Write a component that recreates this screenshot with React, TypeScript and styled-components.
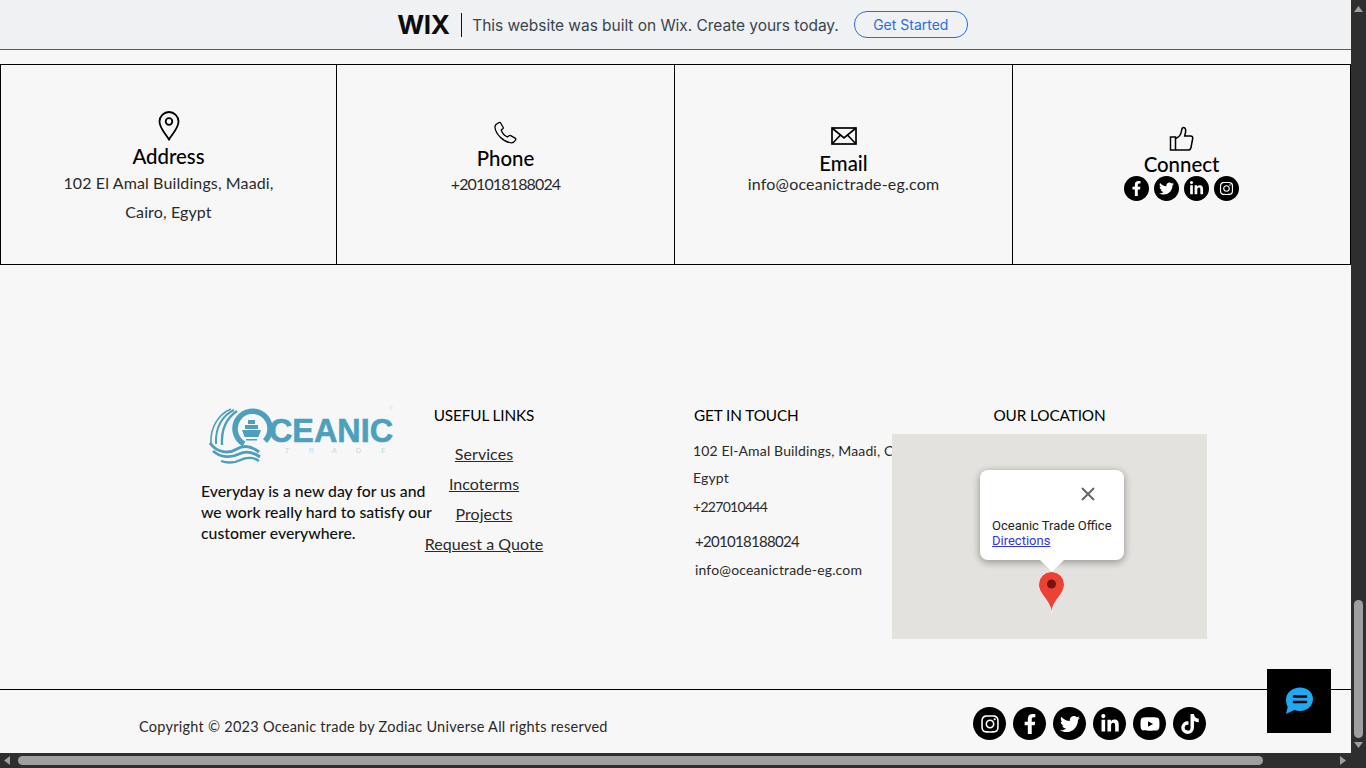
import styled, { createGlobalStyle } from "styled-components";
import { FaFacebookF, FaTwitter, FaLinkedinIn, FaInstagram, FaYoutube, FaTiktok } from "react-icons/fa";

const GlobalStyle = createGlobalStyle`
  html, body {
    margin: 0;
    padding: 0;
    height: 100%;
    overflow: hidden;
    background: #f7f7f7;
    font-family: "Lato", "Liberation Sans", sans-serif;
    color: #000;
  }
`;

const Shell = styled.div`
  width: 1366px;
  height: 768px;
  display: grid;
  grid-template-columns: 1351px 15px;
  grid-template-rows: 753px 15px;
  overflow: hidden;
`;

const Page = styled.div`
  position: relative;
  background: #f7f7f7;
  overflow: hidden;
`;

const Banner = styled.div`
  height: 49px;
  padding-left: 14px;
  background: #eff1f2;
  border-bottom: 1px solid #2f5fb8;
  display: flex;
  align-items: center;
  justify-content: center;
  font-family: "Inter", sans-serif;
`;

const WixMark = styled.span`
  font-family: "Inter", sans-serif;
  font-weight: 700;
  font-size: 26px;
  letter-spacing: -0.4px;
  color: #0c0c0c;
  width: 53px;
`;

const BannerRule = styled.div`
  width: 1px;
  height: 24px;
  background: #111;
  margin: 0 10px 0 11px;
`;

const BannerText = styled.span`
  font-size: 15.5px;
  color: #3a4450;
  letter-spacing: -0.04px;
  margin-top: 1px;
`;

const GetStarted = styled.span`
  margin-left: 15px;
  width: 112px;
  height: 25px;
  border: 1px solid #2a6fdb;
  border-radius: 13px;
  color: #2a6fdb;
  font-size: 14px;
  display: flex;
  align-items: center;
  justify-content: center;
`;

const ContactRow = styled.div`
  margin-top: 14px;
  height: 201px;
  display: grid;
  grid-template-columns: 336px 338px 338px 339px;
  border-top: 1px solid #000;
  border-bottom: 1px solid #000;
  box-sizing: border-box;
`;

const ContactCell = styled.div<{ $top: number; $last?: boolean }>`
  border-left: 1px solid #000;
  ${({ $last }) => $last && "border-right: 1px solid #000;"}
  display: flex;
  flex-direction: column;
  align-items: center;
  padding-top: ${({ $top }) => $top}px;
  box-sizing: border-box;
`;

const ContactIcon = styled.div<{ $gap?: number }>`
  display: flex;
  margin-bottom: ${({ $gap }) => $gap || 0}px;
`;

const ContactTitle = styled.div<{ $gap?: number }>`
  font-size: 20.4px;
  line-height: 24px;
  font-weight: 500;
  color: #000;
  margin-bottom: ${({ $gap }) => $gap || 0}px;
`;

const ContactText = styled.div<{ $spacing?: number }>`
  font-size: 16px;
  line-height: 29px;
  font-weight: 400;
  text-align: center;
  letter-spacing: ${({ $spacing }) => $spacing ?? 0.12}px;
  color: #2a2a2a;
`;

const MiniSocial = styled.div`
  display: flex;
  gap: 5px;
`;

const Disc = styled.span<{ $size: number; $icon: number }>`
  width: ${({ $size }) => $size}px;
  height: ${({ $size }) => $size}px;
  border-radius: 50%;
  background: #000;
  color: #fff;
  display: flex;
  align-items: center;
  justify-content: center;
  font-size: ${({ $icon }) => $icon}px;
`;

const FooterGrid = styled.div`
  height: 424px;
  box-sizing: border-box;
  padding: 140px 0 0 0;
  display: grid;
  grid-template-columns: 201px 222px 122px 148px 199px 315px;
  grid-template-rows: 284px;
`;

const Spacer = styled.div``;

const BrandCol = styled.div`
  display: flex;
  flex-direction: column;
`;

const BrandText = styled.p`
  margin: 15px 0 0;
  width: 240px;
  font-size: 15.8px;
  line-height: 21px;
  font-weight: 500;
  color: #111;
  white-space: nowrap;
`;

const LinksCol = styled.div`
  display: flex;
  flex-direction: column;
  align-items: center;
  white-space: nowrap;
`;

const ColHeading = styled.div`
  font-size: 15.3px;
  line-height: 20px;
  font-weight: 400;
  letter-spacing: -0.1px;
  color: #000;
  white-space: nowrap;
`;

const LinkList = styled.div`
  margin-top: 13.5px;
  display: flex;
  flex-direction: column;
  align-items: center;
`;

const FooterLink = styled.a`
  font-size: 16px;
  line-height: 30.3px;
  font-weight: 400;
  letter-spacing: 0.05px;
  color: #2a2a2a;
  text-decoration: underline;
`;

const TouchCol = styled.div`
  overflow: hidden;
  white-space: nowrap;
`;

const TouchHeading = styled(ColHeading)`
  padding-left: 1px;
`;

const TouchLine = styled.div<{ $size?: number; $indent?: number; $gap?: number; $spacing?: number }>`
  font-size: ${({ $size }) => $size || 14}px;
  line-height: 28px;
  font-weight: 400;
  letter-spacing: ${({ $spacing }) => $spacing ?? 0.15}px;
  color: #2a2a2a;
  padding-left: ${({ $indent }) => $indent || 0}px;
  margin-top: ${({ $gap }) => $gap || 0}px;
`;

const TouchLines = styled.div`
  margin-top: 12px;
`;

const LocationCol = styled.div`
  display: flex;
  flex-direction: column;
`;

const LocationHeading = styled(ColHeading)`
  text-align: center;
  height: 29px;
`;

const MapBox = styled.div`
  position: relative;
  width: 315px;
  height: 205px;
  background: #e3e2de;
`;

const MapPopup = styled.div`
  position: absolute;
  left: 88px;
  top: 36px;
  width: 144px;
  height: 90px;
  box-sizing: border-box;
  padding: 48px 12px 0;
  background: #fff;
  border-radius: 8px;
  box-shadow: 0 2px 7px 1px rgba(0, 0, 0, 0.3);
  font-family: "Roboto", sans-serif;
  font-size: 13px;
  line-height: 15px;
  color: #222;
  white-space: nowrap;

  &::after {
    content: "";
    position: absolute;
    left: 60px;
    top: 90px;
    border-left: 12px solid transparent;
    border-right: 12px solid transparent;
    border-top: 12px solid #fff;
  }
`;

const PopupClose = styled.svg`
  position: absolute;
  left: 100px;
  top: 16px;
`;

const Directions = styled.a`
  display: block;
  color: #3333ee;
  text-decoration: underline;
`;

const MapPin = styled.svg`
  position: absolute;
  left: 145px;
  top: 137px;
`;

const BottomBar = styled.div`
  height: 64px;
  border-top: 1px solid #000;
  display: flex;
  align-items: flex-start;
`;

const Copyright = styled.div`
  margin: 28px 0 0 139px;
  width: 834px;
  font-size: 14.5px;
  line-height: 18px;
  font-weight: 400;
  letter-spacing: 0.26px;
  color: #2a2a2a;
`;

const BigSocial = styled.div`
  margin-top: 17px;
  display: flex;
  gap: 7px;
`;

const ChatButton = styled.div`
  position: absolute;
  left: 1267px;
  top: 669px;
  width: 64px;
  height: 64px;
  background: #000;
  display: flex;
  align-items: center;
  justify-content: center;
`;

const VTrack = styled.div`
  background: #2e2e2e;
  position: relative;
`;

const VThumb = styled.div`
  position: absolute;
  left: 3px;
  right: 3px;
  top: 600px;
  bottom: 15px;
  background: #9f9f9f;
  border-radius: 5px;
`;

const ScrollArrow = styled.svg<{ $left: number; $top: number }>`
  position: absolute;
  left: ${({ $left }) => $left}px;
  top: ${({ $top }) => $top}px;
`;

const HTrack = styled.div`
  background: #2e2e2e;
  position: relative;
`;

const HThumb = styled.div`
  position: absolute;
  left: 18px;
  width: 1245px;
  top: 3px;
  bottom: 3px;
  background: #9f9f9f;
  border-radius: 5px;
`;

const Corner = styled.div`
  background: #2e2e2e;
`;

const Wordmark = styled.text`
  font-family: "Liberation Sans", sans-serif;
  font-weight: 700;
`;

const LogoSmall = styled.text`
  font-family: "Liberation Sans", sans-serif;
  font-weight: 400;
`;

const PinIcon = () => (
  <svg width="24" height="30" viewBox="0 0 24 30" fill="none" stroke="#000" strokeWidth="1.8">
    <path d="M12 28.500C8 22 2.500 17 2.500 10.500a9.500 9.500 0 0 1 19 0C21.500 17 16 22 12 28.500Z" />
    <circle cx="12" cy="10.500" r="3.300" />
  </svg>
);

const PhoneIcon = () => (
  <svg width="26" height="24" viewBox="0 0 26 24" fill="none" stroke="#000" strokeWidth="1.3">
    <path d="M3 3.500 6 1.500c.8-.4 1.400 0 1.800.7l2.300 4c.3.6.2 1.200-.3 1.600L8.200 9c1 3 3.400 5.700 6.200 7l1.600-1.300c.5-.4 1.100-.4 1.700-.1l4.400 2.500c.8.500.9 1.200.5 1.900-1 1.800-2.600 3-4.500 2.800C10 21 2.800 13 2 6.500 1.900 5.300 2.200 4.300 3 3.500Z" />
  </svg>
);

const MailIcon = () => (
  <svg width="26" height="18" viewBox="0 0 26 18" fill="none" stroke="#000" strokeWidth="1.7">
    <rect x="1" y="1" width="24" height="16" />
    <path d="M1 1 13 11 25 1M1 17 9.500 8M25 17 16.500 8" />
  </svg>
);

const ThumbIcon = () => (
  <svg width="26" height="26" viewBox="0 0 26 26" fill="none" stroke="#000" strokeWidth="1.500">
    <rect x="1.500" y="11" width="5" height="13" />
    <path d="M6.500 12.500c3-1 5.500-4 6-7.500.2-1.600.6-3.500 2-3.500 2 0 2.500 2.500 2 5l-.8 3.500h6c1.500 0 2.300 1 2 2.500l-1.700 9c-.3 1.500-1.200 2.500-2.800 2.500H6.500" />
  </svg>
);

const OceanicLogo = () => (
  <svg width="195" height="60" viewBox="0 0 195 60" fill="none">
    <g stroke="#4c9fbd" fill="none">
      <path d="M64 36A17.500 17.500 0 1 0 43 39" strokeWidth="5.500" />
      <path d="M30 4C18 9 9 22 10 38" strokeWidth="1.600" />
      <path d="M33 5C22 10 14 22 15 39" strokeWidth="2" />
      <path d="M36 6C27 12 20 23 21 40" strokeWidth="2.400" />
      <path d="M9 38C16 48 28 49 36 44 42 40 50 41 58 47" strokeWidth="3" />
      <path d="M12 46C20 53 30 53 38 49 44 46 52 47 59 52" strokeWidth="2.800" />
      <path d="M20 56C28 59 36 57 42 54 48 52 54 53 58 56" strokeWidth="2.400" />
    </g>
    <path d="M41 25h19l-2.500 7h-14ZM44 24v-4h13v4ZM47 19v-4h7v4ZM45 34h11v1.500H45Z" fill="#4c9fbd" />
    <Wordmark x="68" y="37" fontSize="33" fill="#4c9fbd" stroke="#4c9fbd" strokeWidth="0.6" textLength="124" lengthAdjust="spacingAndGlyphs">CEANIC</Wordmark>
    <LogoSmall x="84 108 131 155 180" y="48" fontSize="7" fill="#bcd9e3">TRADE</LogoSmall>
    <LogoSmall x="188" y="5" fontSize="5" fill="#cfe2e9">®</LogoSmall>
  </svg>
);

const socialsTop = [FaFacebookF, FaTwitter, FaLinkedinIn, FaInstagram];
const socialsBottom = [FaInstagram, FaFacebookF, FaTwitter, FaLinkedinIn, FaYoutube, FaTiktok];

export default function App() {
  return (
    <Shell>
      <GlobalStyle />
      <Page>
        <Banner>
          <WixMark>WIX</WixMark>
          <BannerRule />
          <BannerText>This website was built on Wix. Create yours today.</BannerText>
          <GetStarted>Get Started</GetStarted>
        </Banner>

        <ContactRow>
          <ContactCell $top={46}>
            <ContactIcon $gap={3}>
              <PinIcon />
            </ContactIcon>
            <ContactTitle>Address</ContactTitle>
            <ContactText>
              102 El Amal Buildings, Maadi,
              <br />
              Cairo, Egypt
            </ContactText>
          </ContactCell>
          <ContactCell $top={56}>
            <ContactIcon $gap={1}>
              <PhoneIcon />
            </ContactIcon>
            <ContactTitle $gap={-1}>Phone</ContactTitle>
            <ContactText $spacing={-0.85}>+201018188024</ContactText>
          </ContactCell>
          <ContactCell $top={62}>
            <ContactIcon $gap={6}>
              <MailIcon />
            </ContactIcon>
            <ContactTitle $gap={-6}>Email</ContactTitle>
            <ContactText $spacing={0.2}>info@oceanictrade-eg.com</ContactText>
          </ContactCell>
          <ContactCell $top={61} $last>
            <ThumbIcon />
            <ContactTitle>Connect</ContactTitle>
            <MiniSocial>
              {socialsTop.map((Icon, i) => (
                <Disc key={i} $size={25} $icon={15}>
                  <Icon />
                </Disc>
              ))}
            </MiniSocial>
          </ContactCell>
        </ContactRow>

        <FooterGrid>
          <Spacer />
          <BrandCol>
            <OceanicLogo />
            <BrandText>
              Everyday is a new day for us and
              <br />
              we work really hard to satisfy our
              <br />
              customer everywhere.
            </BrandText>
          </BrandCol>
          <LinksCol>
            <ColHeading>USEFUL LINKS</ColHeading>
            <LinkList>
              <FooterLink>Services</FooterLink>
              <FooterLink>Incoterms</FooterLink>
              <FooterLink>Projects</FooterLink>
              <FooterLink>Request a Quote</FooterLink>
            </LinkList>
          </LinksCol>
          <Spacer />
          <TouchCol>
            <TouchHeading>GET IN TOUCH</TouchHeading>
            <TouchLines>
              <TouchLine>102 El-Amal Buildings, Maadi, Cairo,</TouchLine>
              <TouchLine $gap={-1}>Egypt</TouchLine>
              <TouchLine $gap={1} $spacing={-0.7}>+227010444</TouchLine>
              <TouchLine $size={15} $indent={2} $gap={6} $spacing={-0.7}>+201018188024</TouchLine>
              <TouchLine $indent={2} $gap={1}>info@oceanictrade-eg.com</TouchLine>
            </TouchLines>
          </TouchCol>
          <LocationCol>
            <LocationHeading>OUR LOCATION</LocationHeading>
            <MapBox>
              <MapPopup>
                <PopupClose width="16" height="16" viewBox="0 0 16 16" stroke="#666" strokeWidth="2">
                  <path d="M2 2 14 14M14 2 2 14" />
                </PopupClose>
                Oceanic Trade Office
                <Directions>Directions</Directions>
              </MapPopup>
              <MapPin width="29" height="44" viewBox="0 0 29 44">
                <path d="M14.500 43C14 36 11.500 32 7.500 26.500 4.500 22.500 1.500 18.500 1.500 13.500a13 13 0 0 1 26 0c0 5-3 9-6 13C17.500 32 15 36 14.500 43Z" fill="#ea4335" stroke="#f4f2ee" strokeWidth="1" />
                <circle cx="14.500" cy="13" r="4.500" fill="#7a1210" />
              </MapPin>
            </MapBox>
          </LocationCol>
        </FooterGrid>

        <BottomBar>
          <Copyright>Copyright © 2023 Oceanic trade by Zodiac Universe All rights reserved</Copyright>
          <BigSocial>
            {socialsBottom.map((Icon, i) => (
              <Disc key={i} $size={33} $icon={20}>
                <Icon />
              </Disc>
            ))}
          </BigSocial>
        </BottomBar>

        <ChatButton>
          <svg width="30" height="30" viewBox="0 0 30 30">
            <path d="M16 1.500c7.500 0 13 5 13 11.500s-5.500 12-13 12c-2 0-4-.4-5.700-1.100L2 28l1.700-7C2.500 18.800 2 16 2 13.500 2 6.500 8.500 1.500 16 1.500Z" fill="#1fa9f4" />
            <path d="M10 10.500h12M10 16h12" stroke="#000" strokeWidth="2.600" strokeLinecap="round" />
          </svg>
        </ChatButton>
      </Page>

      <VTrack>
        <ScrollArrow $left={3} $top={6} width="9" height="6" viewBox="0 0 9 6">
          <path d="M0 6h9L4.500 0Z" fill="#9f9f9f" />
        </ScrollArrow>
        <VThumb />
        <ScrollArrow $left={3} $top={742} width="9" height="6" viewBox="0 0 9 6">
          <path d="M0 0h9L4.500 6Z" fill="#9f9f9f" />
        </ScrollArrow>
      </VTrack>
      <HTrack>
        <ScrollArrow $left={4} $top={3} width="6" height="9" viewBox="0 0 6 9">
          <path d="M6 0v9L0 4.500Z" fill="#9f9f9f" />
        </ScrollArrow>
        <HThumb />
        <ScrollArrow $left={1340} $top={3} width="6" height="9" viewBox="0 0 6 9">
          <path d="M0 0v9l6-4.500Z" fill="#9f9f9f" />
        </ScrollArrow>
      </HTrack>
      <Corner />
    </Shell>
  );
}
